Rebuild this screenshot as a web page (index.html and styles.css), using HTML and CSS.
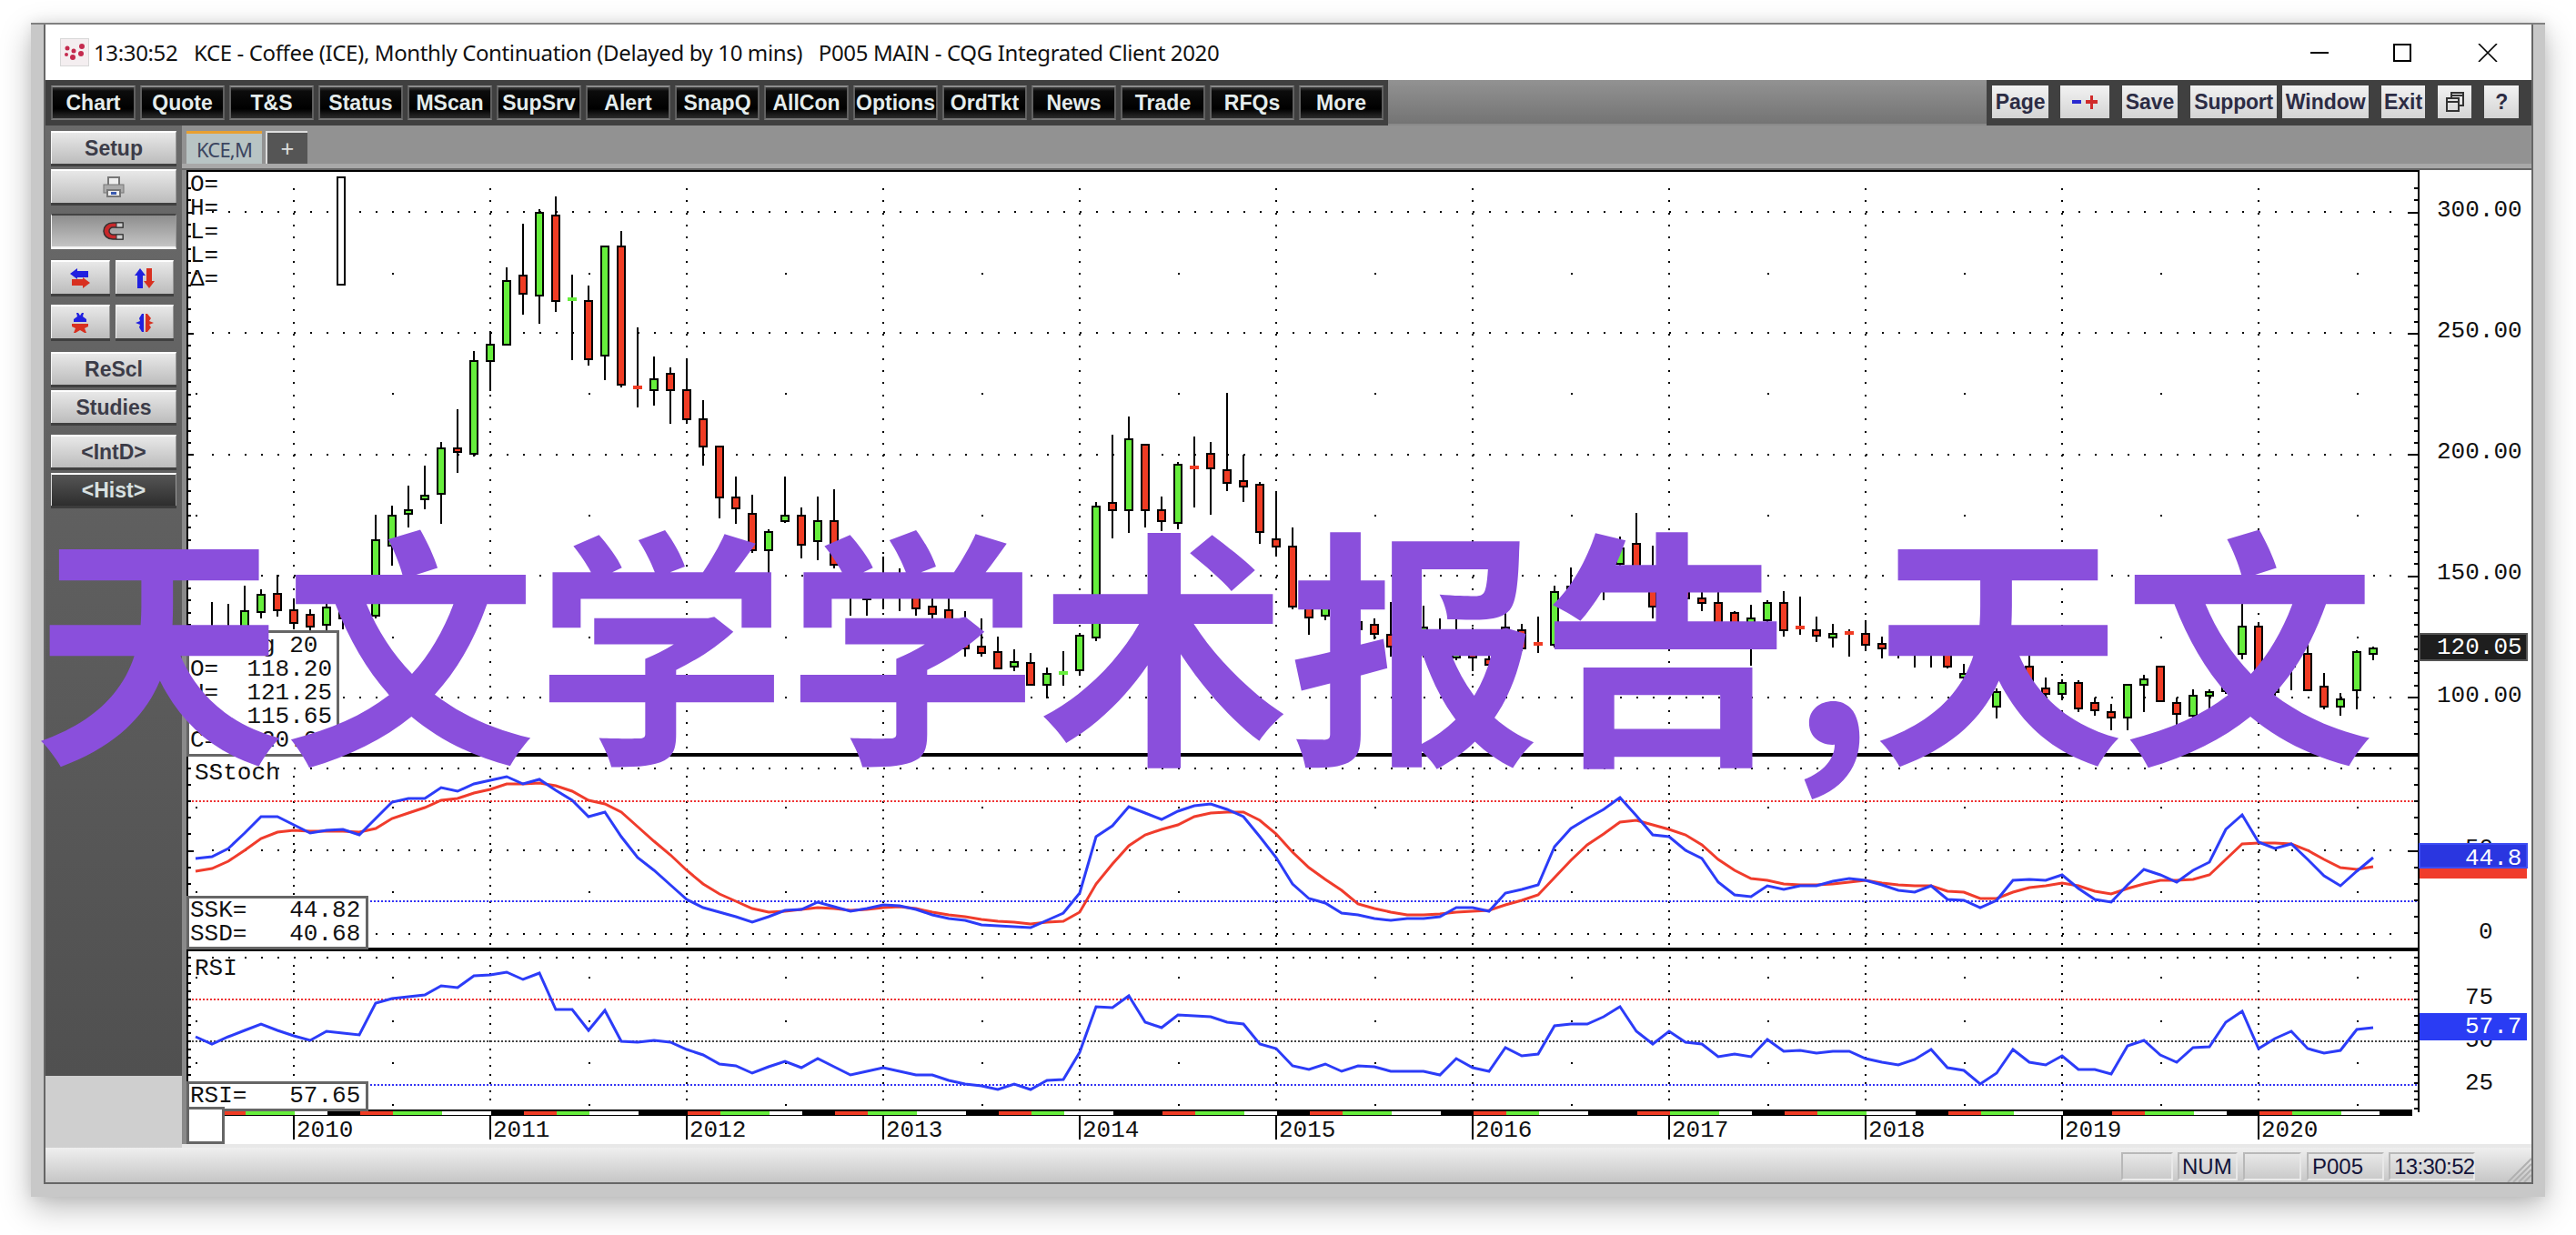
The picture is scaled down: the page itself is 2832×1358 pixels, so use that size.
FILE: index.html
```html
<!DOCTYPE html>
<html lang="en">
<head>
<meta charset="utf-8">
<title>KCE - Coffee (ICE)</title>
<link rel="stylesheet" href="styles.css">
</head>
<body>
<div class="window">
  <div class="frame">
    <header class="titlebar">
      <svg class="app-icon" width="32" height="31" viewBox="0 0 32 31">
        <rect x="0.5" y="0.5" width="31" height="30" fill="#f4eef0" stroke="#d8d8d8"/>
        <g fill="#c42a4e">
          <circle cx="8" cy="11" r="2.5"/><circle cx="15" cy="14" r="2.5"/><circle cx="24" cy="9" r="3"/>
          <circle cx="7" cy="18" r="2"/><circle cx="14" cy="21" r="3"/><circle cx="23" cy="17" r="3"/>
        </g>
      </svg>
      <span class="title-text">13:30:52&nbsp;&nbsp; KCE - Coffee (ICE), Monthly Continuation (Delayed by 10 mins)&nbsp;&nbsp; P005 MAIN - CQG Integrated Client 2020</span>
      <div class="win-controls">
        <svg class="win-min" width="20" height="2" viewBox="0 0 20 2"><rect width="20" height="2" fill="#000"/></svg>
        <svg class="win-max" width="20" height="20" viewBox="0 0 20 20"><rect x="1" y="1" width="18" height="18" fill="none" stroke="#000" stroke-width="2"/></svg>
        <svg class="win-close" width="22" height="20" viewBox="0 0 22 20"><path d="M1 0 21 20M21 0 1 20" stroke="#000" stroke-width="1.6" fill="none"/></svg>
      </div>
    </header>

    <nav class="toolbar">
      <div class="tb-left">
        <button class="tb-btn">Chart</button><button class="tb-btn">Quote</button><button class="tb-btn">T&amp;S</button><button class="tb-btn">Status</button><button class="tb-btn">MScan</button><button class="tb-btn">SupSrv</button><button class="tb-btn">Alert</button><button class="tb-btn">SnapQ</button><button class="tb-btn">AllCon</button><button class="tb-btn">Options</button><button class="tb-btn">OrdTkt</button><button class="tb-btn">News</button><button class="tb-btn">Trade</button><button class="tb-btn">RFQs</button><button class="tb-btn">More</button>
      </div>
      <div class="tb-mid"></div>
      <div class="tb-right">
        <button class="tr-btn w-page">Page</button>
        <button class="tr-btn w-zoom"><svg width="28" height="18" viewBox="0 0 28 18"><rect x="0" y="7" width="10" height="4" fill="#2a2ad0"/><path d="M15 7h5V2h3v5h5v4h-5v6h-3v-6h-5z" fill="#d02a2a"/></svg></button>
        <button class="tr-btn w-save">Save</button>
        <button class="tr-btn w-support tight">Support</button>
        <button class="tr-btn w-window">Window</button>
        <button class="tr-btn w-exit">Exit</button>
        <button class="tr-btn w-sq"><svg width="20" height="24" viewBox="0 0 20 24"><path d="M6 8V2h13v14h-5M1 8h13v14H1zM1 12h13M6 5h13" fill="none" stroke="#333" stroke-width="2"/></svg></button>
        <button class="tr-btn w-sq">?</button>
      </div>
    </nav>

    <div class="main">
      <aside class="side">
        <div class="side-buttons">
          <div class="sb-group">
            <button class="sb-btn h-36">Setup</button>
            <button class="sb-btn h-37"><svg width="24" height="23" viewBox="0 0 24 23"><path d="M6 9V1h12v8" fill="#eee" stroke="#777" stroke-width="2"/><rect x="1" y="9" width="22" height="9" fill="#aaa" stroke="#777" stroke-width="1"/><rect x="5" y="15" width="14" height="7" fill="#eee" stroke="#777" stroke-width="2"/><rect x="9" y="17" width="6" height="3" fill="#3a5ab0"/></svg></button>
          </div>
          <div class="sb-group">
            <button class="sb-btn h-39 pressed"><svg width="24" height="20" viewBox="0 0 24 20"><path d="M22 1H11C5 1 1 5 1 10s4 9 10 9h11v-5H11c-2 0-4-2-4-4s2-4 4-4h11z" fill="#c8282a" stroke="#333" stroke-width="1.5"/><rect x="15" y="1" width="7" height="5" fill="#ccc" stroke="#333"/><rect x="15" y="14" width="7" height="5" fill="#ccc" stroke="#333"/></svg></button>
          </div>
          <div class="sb-group sb-row">
            <button class="sb-btn h-37 half"><svg width="22" height="22" viewBox="0 0 22 22"><path d="M0 6 8 0v3h12v7H8v2z" fill="#2020e0"/><path d="M22 16 14 22v-3H2v-7h12v-2z" fill="#d83020"/></svg></button>
            <button class="sb-btn h-37 half"><svg width="22" height="22" viewBox="0 0 22 22"><path d="M6 0 12 8H9v14H3V8H0z" fill="#2020e0"/><path d="M16 22 10 14h3V0h6v14h3z" fill="#d83020"/></svg></button>
          </div>
          <div class="sb-group sb-row">
            <button class="sb-btn h-37 half"><svg width="22" height="22" viewBox="0 0 22 22"><path d="M7 0h2l2 3 2-3h2l-1 4 4 3v3H4V7l4-3z" fill="#2020e0"/><path d="M2 12h18v3l-4 2 2 5h-2l-5-3-5 3H4l2-5-4-2z" fill="#d83020"/></svg></button>
            <button class="sb-btn h-37 half"><svg width="22" height="22" viewBox="0 0 22 22"><path d="M10 1v20H8l-3-5 1-3-5-2 5-2-1-3 3-5z" fill="#2020e0"/><path d="M12 1v20h2l4-5-2-3 5-2-5-2 2-3-4-5z" fill="#d83020"/></svg></button>
          </div>
          <div class="sb-group sb-shift-3">
            <button class="sb-btn h-36">ReScl</button>
            <button class="sb-btn h-36">Studies</button>
          </div>
          <div class="sb-group sb-shift-1">
            <button class="sb-btn h-36">&lt;IntD&gt;</button>
            <button class="sb-btn h-36 dark">&lt;Hist&gt;</button>
          </div>
        </div>
        <div class="side-foot"></div>
      </aside>

      <section class="chart-col">
        <div class="tabs">
          <div class="tab tab-active">KCE,M</div>
          <div class="tab tab-add">+</div>
        </div>
        <div class="tab-rule"></div>
        <div class="chart-wrap" id="chart"></div>
        <div class="chart-foot"></div>
      </section>
    </div>

    <footer class="statusbar">
      <div class="st-cell w-a"></div>
      <div class="st-cell w-num">NUM</div>
      <div class="st-cell w-b"></div>
      <div class="st-cell w-p">P005</div>
      <div class="st-cell w-t">13:30:52</div>
      <svg class="grip" width="30" height="30" viewBox="0 0 30 30"><path d="M30 4 4 30M30 10 10 30M30 16 16 30M30 22 22 30" stroke="#b0b0b0" stroke-width="2" fill="none"/></svg>
    </footer>
  </div>
</div>
<div class="overlay-text">天文学学术报告,天文</div>
<script src="chart.js"></script>
</body>
</html>
```

FILE: styles.css
```css
* { box-sizing: border-box; }
html, body { margin: 0; padding: 0; background: #fff; overflow: hidden; }
body { width: 2832px; height: 1358px; padding: 25px 34px 42px; font-family: "Liberation Sans", Arial, sans-serif; position: relative; }
button { font-family: inherit; padding: 0; margin: 0; border: 0; }

.window { height: 1291px; background: #c8c8c8; border-top: 2px solid #808080; padding: 0 13px 14px 14px; box-shadow: 0 12px 32px rgba(0,0,0,.27), 0 0 14px rgba(0,0,0,.08); }
.frame { height: 100%; border: solid #666; border-width: 0 2px 2px 2px; display: flex; flex-direction: column; background: #fff; }

.titlebar { height: 61px; background: #fff; display: flex; align-items: center; padding-left: 16px; flex: none; }
.app-icon { flex: none; margin-right: 5px; }
.title-text { font-family: "Noto Sans", sans-serif; font-size: 24px; letter-spacing: -.37px; color: #111; white-space: nowrap; }
.win-controls { margin-left: auto; display: flex; align-items: center; height: 20px; }
.win-min { margin-right: 71px; }
.win-max { margin-right: 73px; }
.win-close { margin-right: 37px; }

.toolbar { height: 50px; flex: none; display: flex; }
.tb-left { background: #404040; display: flex; gap: 5px; padding: 6px 0 0 6px; width: 1476px; flex: none; }
.tb-btn { width: 93px; height: 38px; background: linear-gradient(#3a3a3a 0, #0c0c0c 12%, #000 70%, #2c2c2c 100%); border: 2px solid #606060; border-top-color: #8c8c8c; border-bottom-color: #777; color: #e4ecec; font-weight: 700; font-size: 23px; text-align: center; white-space: nowrap; }
.tb-mid { flex: 1; background: linear-gradient(#929292, #747474); border-bottom: 2px solid #8a8a8a; }
.tb-right { width: 599px; flex: none; background: #404040; display: flex; padding: 6px 0 0 6px; }
.tr-btn { height: 36px; background: linear-gradient(#f2f2f2, #d4d4d4); color: #2c2c44; font-weight: 700; font-size: 23px; text-align: center; white-space: nowrap; display: flex; align-items: center; justify-content: center; }
.w-page { width: 63px; margin-right: 13px; }
.w-zoom { width: 54px; margin-right: 14px; }
.w-save { width: 62px; margin-right: 14px; }
.w-support { width: 96px; margin-right: 6px; }
.w-window { width: 96px; margin-right: 14px; }
.w-exit { width: 48px; margin-right: 14px; }
.w-sq { width: 38px; margin-right: 14px; }
.tight { letter-spacing: -.2px; }

.main { flex: 1; display: flex; min-height: 0; }
.side { width: 150px; flex: none; display: flex; flex-direction: column; }
.side-buttons { flex: 1; background: linear-gradient(#6a6a6a, #505050); padding: 6px 6px 0; display: flex; flex-direction: column; gap: 12px; }
.side-foot { height: 79px; flex: none; background: #cfcfcf; }
.sb-group { display: flex; flex-direction: column; gap: 6px; }
.sb-row { flex-direction: row; justify-content: space-between; padding-right: 3px; }
.sb-shift-3 { margin-top: 3px; }
.sb-shift-1 { margin-top: 1px; }
.sb-btn { background: linear-gradient(#e8e8e8, #bcbcbc); border-top: 2px solid #fff; border-left: 1px solid #f4f4f4; border-right: 1px solid #999; box-shadow: 0 3px 0 #404040; color: #3c3c48; font-weight: 700; font-size: 23px; display: flex; align-items: center; justify-content: center; width: 100%; }
.h-36 { height: 36px; }
.h-37 { height: 37px; }
.h-39 { height: 39px; }
.half { width: 65px; }
.pressed { background: linear-gradient(#8e8e8e, #c4c4c4); border-top: 2px solid #444; border-bottom: 3px solid #f4f4f4; box-shadow: none; }
.dark { background: linear-gradient(#555, #2e2e2e); color: #d8e0e0; border-top-color: #fff; border-left-color: #ddd; box-shadow: 0 3px 0 #3c3c3c; }

.chart-col { flex: 1; min-width: 0; display: flex; flex-direction: column; background: #929292; }
.tabs { height: 42px; flex: none; display: flex; align-items: flex-end; padding: 6px 0 0 5px; gap: 4px; background: #929292; }
.tab { height: 36px; font-family: "Noto Sans", sans-serif; display: flex; align-items: center; justify-content: center; }
.tab-active { width: 83px; background: #b8c4c4; border-top: 3px solid #e8a030; color: #3c4660; font-size: 22px; letter-spacing: -.8px; }
.tab-add { width: 46px; background: #555; border-top: 2px solid #ddd; border-left: 2px solid #ddd; color: #ddd; font-size: 26px; }
.tab-rule { height: 7px; flex: none; background: linear-gradient(#a8a8a8 0 70%, #666 70%); }
.chart-wrap { height: 1071px; flex: none; padding: 0 4px 0 5px; background: linear-gradient(90deg, #8a8a8a 0 5px, #fff 5px); }
.chart-wrap svg { display: block; background: #fff; }
.chart-foot { flex: 1; background: #e8e8e8; }

.lbl { font-family: "Liberation Mono", monospace; font-size: 26px; fill: #111; white-space: pre; }
.lbl-w { fill: #fff; }

.statusbar { height: 38px; flex: none; background: linear-gradient(#efefef, #c6c6c6); display: flex; align-items: flex-start; padding-top: 5px; position: relative; }
.st-cell { height: 31px; border: 2px solid; border-color: #b8b8b8 #e8e8e8 #ececec #b8b8b8; font-size: 24px; line-height: 28px; color: #14143a; padding-left: 4px; white-space: nowrap; }
.w-a { width: 57px; margin-left: auto; }
.w-num { width: 66px; margin-left: 5px; padding-left: 3px; }
.w-b { width: 64px; margin-left: 6px; }
.w-p { width: 85px; margin-left: 6px; }
.w-t { width: 95px; margin-left: 5px; margin-right: 62px; letter-spacing: -.6px; }
.grip { position: absolute; right: 0; bottom: 0; }

.overlay-text { position: absolute; left: 37px; top: 562px; font-family: "Noto Sans CJK SC", "Liberation Sans", sans-serif; font-weight: 700; font-size: 276px; line-height: 276px; color: #8a4fdc; white-space: nowrap; }
```

FILE: chart.js
```js
(function () {
  var NS = 'xmlns="http://www.w3.org/2000/svg"';
  var X = function (k) { return 323 + 18 * k; };
  var L = 207, R = 2658;

  // [k, high, low, bodyTop, bodyBottom, colour]  d* = flat doji, no body
  var candles = [
    [-5,662,693],[-4,664,693],[-3,644,692,672,690,'g'],[-2,648,680,654,673,'g'],[-1,632,678,653,671,'r'],
    [0,658,692,671,685,'r'],[1,670,693,676,689,'r'],[2,662,693,668,687,'g'],[3,665,692,672,680,'r'],[4,640,680,650,670,'g'],
    [5,566,680,594,677,'g'],[6,556,622,567,600,'g'],[7,534,580,561,565,'g'],[8,512,560,545,549,'g'],[9,486,576,493,543,'g'],
    [10,450,520,493,497,'r'],[11,386,502,397,499,'g'],[12,364,430,379,397,'g'],[13,294,379,309,379,'g'],[14,246,346,303,323,'r'],
    [15,230,356,234,325,'g'],[16,216,343,237,331,'r'],[17,302,396,329,329,'dg'],[18,314,402,331,395,'r'],[19,271,418,271,391,'g'],
    [20,254,426,271,423,'r'],[21,360,448,426,426,'dr'],[22,392,446,417,429,'g'],[23,404,466,411,429,'r'],[24,396,466,429,461,'r'],
    [25,440,512,461,491,'r'],[26,491,570,491,547,'r'],[27,524,576,547,559,'r'],[28,544,608,565,605,'r'],[29,582,640,585,605,'g'],
    [30,524,575,567,573,'g'],[31,558,614,567,599,'r'],[32,546,616,573,595,'g'],[33,538,625,573,621,'r'],[34,630,677,640,657,'r'],
    [35,632,677,645,659,'g'],[36,612,670,645,652,'g'],[37,625,672,640,657,'r'],[38,630,677,645,669,'r'],[39,640,680,667,675,'r'],
    [40,650,690,671,690,'r'],[41,672,722,690,713,'r'],[42,680,722,711,718,'r'],[43,700,735,717,735,'r'],[44,714,738,728,733,'g'],
    [45,718,753,729,753,'r'],[46,734,768,741,753,'g'],[47,716,754,740,740,'dg'],[48,696,742,699,737,'g'],[49,552,705,557,701,'g'],
    [50,478,592,553,561,'r'],[51,458,586,483,561,'g'],[52,488,580,489,561,'r'],[53,546,584,561,573,'r'],[54,508,582,511,575,'g'],
    [55,480,558,514,514,'dr'],[56,486,566,499,515,'r'],[57,432,540,517,531,'r'],[58,500,552,529,535,'r'],[59,530,598,533,585,'r'],
    [60,540,612,593,601,'r'],[61,580,670,601,667,'r'],[62,650,698,665,679,'r'],[63,660,682,667,677,'g'],[64,660,690,670,680,'r'],
    [65,670,700,684,692,'r'],[66,680,703,687,697,'r'],[67,662,722,698,711,'r'],[68,680,720,700,712,'g'],[69,666,723,690,708,'g'],
    [70,680,722,695,712,'r'],[71,680,726,700,723,'g'],[72,690,738,700,723,'r'],[73,715,740,725,731,'r'],[74,670,710,690,705,'r'],
    [75,686,716,693,713,'r'],[76,678,718,708,708,'dr'],[77,644,712,651,709,'g'],[78,624,673,645,660,'g'],[79,640,670,648,660,'g'],
    [80,625,660,630,650,'g'],[81,590,625,603,620,'g'],[82,564,640,598,640,'r'],[83,600,680,625,667,'r'],[84,630,660,640,652,'g'],
    [85,647,662,650,658,'r'],[86,647,672,658,663,'r'],[87,650,695,663,690,'r'],[88,672,695,674,690,'r'],[89,665,732,680,700,'g'],
    [90,660,690,663,682,'g'],[91,650,700,663,693,'r'],[92,656,698,690,690,'dr'],[93,678,706,693,699,'r'],[94,686,712,697,701,'g'],
    [95,692,722,696,696,'dr'],[96,682,716,697,709,'r'],[97,700,724,708,713,'r'],[98,700,724,712,719,'r'],[99,705,734,710,717,'r'],
    [100,695,734,705,715,'g'],[101,690,735,705,733,'r'],[102,730,755,741,745,'g'],[103,725,780,735,755,'r'],[104,757,790,761,777,'g'],
    [105,725,765,735,755,'r'],[106,717,760,733,750,'r'],[107,745,770,757,763,'r'],[108,747,770,751,763,'g'],[109,748,783,751,779,'r'],
    [110,767,787,773,781,'r'],[111,774,803,783,789,'r'],[112,753,803,753,789,'g'],[113,742,783,747,753,'g'],[114,733,771,733,771,'r'],
    [115,767,797,773,785,'r'],[116,758,790,765,787,'g'],[117,758,780,761,765,'g'],[118,735,763,740,760,'g'],[119,664,725,689,719,'g'],
    [120,684,745,689,740,'r'],[121,715,765,720,761,'g'],[122,690,759,695,733,'r'],[123,708,759,719,759,'r'],[124,740,780,755,777,'r'],
    [125,762,787,769,777,'g'],[126,715,780,717,759,'g'],[127,711,726,713,719,'g']
  ];

  // Absolute y of each month, series starting at k = -6
  var ssk = [944,942,933,916,898,898,907,916,913,912,918,900,882,878,878,866,870,862,858,854,862,857,869,880,898,893,920,943,957,973,989,998,1003,1008,1014,1008,1001,1000,992,997,1002,999,995,996,1000,1006,1010,1012,1017,1018,1019,1020,1012,1004,982,920,908,887,894,901,892,886,884,890,898,920,943,972,988,993,1004,1006,1010,1012,1010,1010,1008,998,998,1002,982,978,973,931,911,900,890,877,897,918,920,935,944,970,984,986,974,978,974,974,969,966,968,973,979,981,974,989,990,998,990,968,967,968,962,977,989,992,973,956,962,970,957,948,912,896,926,933,928,945,963,974,958,943];
  var ssd = [958,955,947,935,922,915,913,914,914,914,915,911,900,894,888,880,878,872,868,862,862,861,864,870,880,884,893,909,925,940,957,972,983,991,999,1003,1002,1000,998,999,1001,1000,998,997,999,1003,1006,1008,1011,1013,1014,1016,1014,1013,1003,972,950,930,918,912,907,898,894,893,893,902,917,937,954,967,979,994,999,1003,1006,1006,1005,1003,1002,1001,995,990,984,965,946,929,917,904,902,907,912,918,929,945,957,966,968,972,973,973,972,970,968,971,973,974,974,980,981,988,988,981,976,974,971,974,980,983,977,972,968,968,967,962,945,928,927,927,928,935,945,954,956,953];
  var rsi = [1140,1148,1140,1133,1126,1133,1139,1144,1134,1136,1138,1103,1098,1096,1094,1084,1086,1073,1072,1069,1077,1070,1110,1110,1133,1111,1145,1146,1144,1146,1154,1160,1170,1172,1180,1173,1167,1174,1164,1173,1182,1178,1174,1178,1182,1182,1188,1192,1194,1198,1192,1198,1188,1187,1157,1107,1108,1095,1124,1130,1116,1117,1118,1124,1126,1148,1153,1172,1176,1170,1178,1172,1173,1178,1178,1178,1182,1164,1174,1178,1152,1161,1159,1128,1126,1126,1118,1107,1134,1148,1134,1146,1148,1162,1159,1162,1143,1156,1155,1158,1156,1156,1164,1168,1171,1165,1154,1174,1177,1192,1180,1154,1168,1171,1161,1176,1176,1181,1150,1144,1160,1168,1152,1151,1124,1112,1153,1142,1134,1153,1158,1155,1132,1130];

  var out = [];
  var dots = '';
  function dot(x, y) { dots += 'M' + Math.round(x) + ' ' + Math.round(y) + 'h2v2h-2z'; }
  function rect(x, y, w, h, f, extra) { out.push('<rect x="' + x + '" y="' + y + '" width="' + w + '" height="' + h + '" fill="' + f + '"' + (extra || '') + '/>'); }
  function text(x, y, s, cls) { out.push('<text x="' + x + '" y="' + y + '" class="lbl ' + (cls || '') + '">' + s + '</text>'); }
  function hline(y, c) { out.push('<line x1="' + L + '" x2="' + R + '" y1="' + y + '" y2="' + y + '" stroke="' + c + '" stroke-width="2" stroke-dasharray="2 2"/>'); }
  function series(a, c) {
    var p = a.map(function (y, i) { return X(i - 6) + ',' + y; }).join(' ');
    out.push('<polyline points="' + p + '" fill="none" stroke="' + c + '" stroke-width="3" stroke-linejoin="miter"/>');
  }

  // grid: horizontal dotted levels
  var k, y, i;
  [233, 366, 500, 633, 767, 845, 935, 1027, 1053].forEach(function (lv) {
    for (k = -5; k <= 128; k++) dot(X(k), lv - 1);
  });
  // sparse mid-year levels
  [301, 433, 567, 701, 888, 981, 1075, 1123, 1169, 1215].forEach(function (lv) {
    for (k = -6; k <= 126; k += 12) dot(X(k), lv - 1);
  });
  // year verticals
  for (k = 0; k <= 120; k += 12) {
    for (y = 207; y < 822; y += 13.34) dot(X(k) - 1, y);
    for (y = 853.3; y < 1040; y += 9.2) dot(X(k) - 1, y);
    for (y = 1061; y < 1214; y += 9.2) dot(X(k) - 1, y);
  }
  out.push('<path d="' + dots + '" fill="#000"/>');

  hline(881, '#ee3434'); hline(991, '#3434f4'); hline(1099, '#ee3434'); hline(1145, '#444'); hline(1193, '#3434f4');

  // candles
  candles.forEach(function (c) {
    var x = X(c[0]);
    rect(x - 1, c[1], 2, c[2] - c[1], '#000');
    if (c.length < 6) return;
    var col = c[5].slice(-1) === 'g' ? '#66ee3c' : '#f03c24';
    if (c[5].length === 2) { rect(x - 5, c[3] - 2, 10, 4, col); return; }
    rect(x - 4, c[3], 8, c[4] - c[3], col, ' stroke="#000" stroke-width="2"');
  });

  // cursor bar
  rect(371, 195, 8, 118, '#fff', ' stroke="#000" stroke-width="2"');

  series(ssd, '#f03c2c'); series(ssk, '#2c3cf8');
  series(rsi, '#2c3cf8');

  // panel separators and axes
  rect(205, 187, 2455, 2, '#000');
  rect(205, 828, 2454, 4, '#000');
  rect(205, 1042, 2454, 4, '#000');
  rect(205, 187, 2, 1034, '#000');
  rect(2658, 187, 2, 1036, '#000');
  var ticks = '';
  function tick(y, major) {
    ticks += 'M207 ' + Math.round(y) + 'h' + (major ? 6 : 3) + 'v2h-' + (major ? 6 : 3) + 'z';
    ticks += 'M2658 ' + Math.round(y) + 'h-' + (major ? 11 : 4) + 'v2h' + (major ? 11 : 4) + 'z';
  }
  for (i = -2; i < 44; i++) tick(232.5 + i * 13.34, i >= 0 && i % 10 === 0);
  for (y = 844; y < 1030; y += 18.1) tick(y, Math.abs(y - 935) < 9);
  for (y = 1052; y < 1220; y += 9.2) tick(y, false);
  out.push('<path d="' + ticks + '" fill="#000"/>');

  // time ribbon
  rect(205, 1220, 2447, 7, '#000');
  var cycle = [2, 3, 2, 2, 2, 3, 3, 2, 2, 2, 3, 3];
  var cols = ['#f03c24', '#66ee3c', '#fff', '#000'];
  var rx = 246 - 12;
  for (i = 0; rx < 2652; i++) {
    var w = cycle[i % 12] * 18;
    var xx = Math.max(rx, 246);
    var ww = Math.min(rx + w, 2616) - xx;
    if (ww > 0) rect(xx, 1222, ww, 4, cols[i % 4]);
    rx += w;
  }
  // year axis
  for (k = 0; k <= 10; k++) {
    rect(X(12 * k) - 1, 1227, 2, 26, '#000');
    text(X(12 * k) + 3, 1250, String(2010 + k));
  }

  // price labels
  text(2679, 238, '300.00'); text(2679, 371, '250.00'); text(2679, 504, '200.00');
  text(2679, 637, '150.00'); text(2679, 772, '100.00');
  text(2710, 940, '50'); text(2725, 1032, '0');
  text(2710, 1104, '75'); text(2710, 1151, '50'); text(2710, 1198, '25');
  rect(2660, 697, 118, 29, '#1e1e1e', ' stroke="#555" stroke-width="2"');
  text(2679, 719, '120.05', 'lbl-w');
  rect(2660, 953, 118, 13, '#f03c2c');
  rect(2660, 928, 118, 26, '#2a36e0', ' stroke="#3c4cf4" stroke-width="2"');
  text(2710, 951, '44.8', 'lbl-w');
  rect(2660, 1114, 118, 30, '#2a3cf4');
  text(2710, 1136, '57.7', 'lbl-w');

  // info boxes
  ['O=', 'H=', 'L=', 'L=', '&#916;='].forEach(function (s, n) { text(209, 210 + n * 26, s); });

  rect(206, 694, 165, 136, '#fff', ' stroke="#666" stroke-width="3"');
  ['   Avg 20', 'O=  118.20', 'H=  121.25', 'L=  115.65', 'C=  120.05'].forEach(function (s, n) { text(209, 717 + n * 26, s); });
  text(214, 857, 'SStoch');
  rect(206, 986, 197, 56, '#fff', ' stroke="#666" stroke-width="3"');
  text(209, 1008, 'SSK=   44.82'); text(209, 1034, 'SSD=   40.68');
  text(214, 1072, 'RSI');
  rect(206, 1190, 197, 30, '#fff', ' stroke="#666" stroke-width="3"');
  text(209, 1212, 'RSI=   57.65');
  rect(206, 1218, 39, 38, '#fff', ' stroke="#666" stroke-width="3"');

  document.getElementById('chart').innerHTML =
    '<svg ' + NS + ' width="2574" height="1071" viewBox="205 187 2574 1071" shape-rendering="crispEdges">' +
    out.join('').replace(/<polyline /g, '<polyline shape-rendering="geometricPrecision" ') + '</svg>';
})();
```
